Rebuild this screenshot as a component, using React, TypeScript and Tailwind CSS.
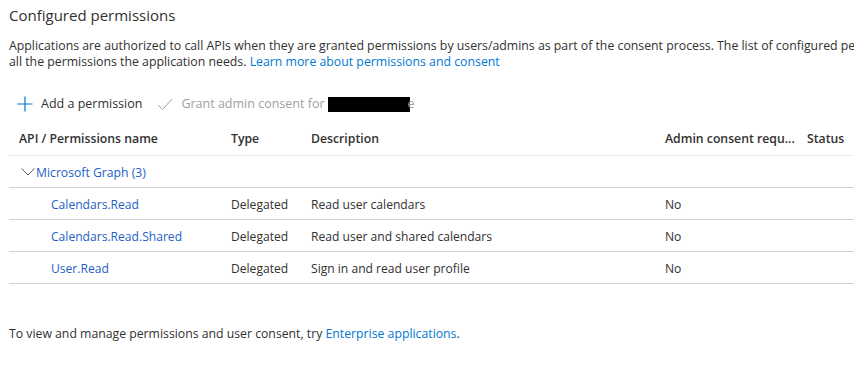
const rows = [
  { name: 'Calendars.Read', type: 'Delegated', desc: 'Read user calendars', admin: 'No' },
  { name: 'Calendars.Read.Shared', type: 'Delegated', desc: 'Read user and shared calendars', admin: 'No' },
  { name: 'User.Read', type: 'Delegated', desc: 'Sign in and read user profile', admin: 'No' },
];

const cols = 'grid-cols-[222px_80px_354px_142px_47px]';

export default function App() {
  return (
    <div
      className="h-[365px] w-[854px] overflow-hidden bg-white pl-[9px] text-[12.2px] text-[#323130]"
      style={{ fontFamily: '"Open Sans", "Noto Sans", sans-serif' }}
    >
      <h1 className="pt-[4px] text-[15px] leading-[22px]">Configured permissions</h1>

      <p className="mt-[12px] whitespace-nowrap text-[12.3px] leading-[16px]">
        Applications are authorized to call APIs when they are granted permissions by users/admins as part of the consent process. The list of configured permissions should include
        <br />
        all the permissions the application needs.{' '}
        <a className="text-[#0078d4]">Learn more about permissions and consent</a>
      </p>

      <div className="mt-[24px] flex h-[20px] items-center text-[12.5px]">
        <svg width="16" height="16" viewBox="0 0 16 16" className="ml-[8px]">
          <path d="M8 0.5v15M0.5 8h15" stroke="#0078d4" strokeWidth="1.2" fill="none" />
        </svg>
        <span className="ml-[8px]">Add a permission</span>
        <svg width="16" height="13" viewBox="0 0 16 13" className="ml-[15px]">
          <path d="M1 7l4.5 4.5L15 1" stroke="#a19f9d" strokeWidth="1" fill="none" />
        </svg>
        <span className="ml-[8px] text-[#a19f9d]">Grant admin consent for</span>
        <span className="ml-[3px] inline-block h-[15px] w-[82px] bg-black" />
        <span className="-ml-[2px] text-[#a19f9d]">e</span>
      </div>

      <div className={`mt-[6px] grid ${cols} border-b border-[#edebe9] pt-[2px] text-[12.25px] font-semibold leading-[33px]`}>
        <div className="pl-[10px]">API / Permissions name</div>
        <div>Type</div>
        <div>Description</div>
        <div className="whitespace-nowrap">Admin consent requ...</div>
        <div>Status</div>
      </div>

      <div className="flex h-[32px] items-center border-b border-[#d2d0ce] pt-[3px] text-[#1d5fc7]">
        <svg width="14" height="8" viewBox="0 0 14 8" className="ml-[12px] -mt-[2px]">
          <path d="M0.5 0.5L7 7l6.5-6.5" stroke="#605e5c" strokeWidth="1" fill="none" />
        </svg>
        <span className="ml-[1px]">Microsoft Graph (3)</span>
      </div>

      {rows.map((r) => (
        <div key={r.name} className={`grid h-[32px] ${cols} items-center border-b border-[#d2d0ce] pt-[3px] text-[12.1px]`}>
          <div className="pl-[42px] text-[#1d5fc7]">{r.name}</div>
          <div>{r.type}</div>
          <div>{r.desc}</div>
          <div>{r.admin}</div>
          <div />
        </div>
      ))}

      <p className="mt-[42px] text-[12.25px] leading-[16px]">
        To view and manage permissions and user consent, try{' '}
        <a className="text-[#0078d4]">Enterprise applications</a>.
      </p>
    </div>
  );
}
